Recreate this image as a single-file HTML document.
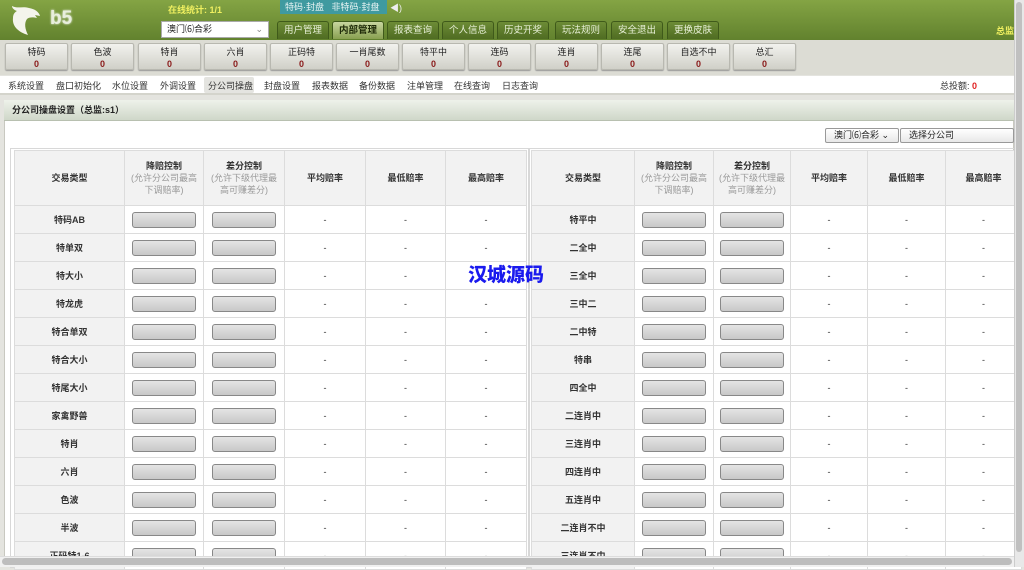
<!DOCTYPE html>
<html><head><meta charset="utf-8">
<style>
*{margin:0;padding:0;box-sizing:border-box}
body{width:1024px;height:567px;overflow:hidden;position:relative;background:#e4e4df;font-family:"Liberation Sans","Noto Sans CJK SC",sans-serif;font-size:9px;color:#222}
.abs{position:absolute}
#hdr{left:0;top:0;width:1014px;height:40px;background:linear-gradient(#84a444,#62822e)}
.tab{position:absolute;top:21px;height:18px;width:52px;background:linear-gradient(#6d8c36,#4f6c22);border:1px solid #3f5a1a;border-bottom:none;border-radius:3px 3px 0 0;color:#e8f0d8;font-size:9.5px;text-align:center;line-height:17px}
.tab.on{background:linear-gradient(#c8d6a0,#88a050);color:#1e2a08;font-weight:bold}
#bar{left:0;top:40px;width:1014px;height:35px;background:#dcdcd4}
.btn{position:absolute;top:43px;width:63px;height:27px;background:linear-gradient(#f2f2ee,#d0d0c8);border:1px solid #b8b8b0;border-radius:2px;box-shadow:0 1px 1px #999;text-align:center;font-size:9px;line-height:12px;padding-top:2px}
.btn b{color:#8a1a1a;display:block;font-size:9px}
#sub{left:0;top:76px;width:1014px;height:19px;background:#fff;border-bottom:2px solid #d4d4cc}
.sm{position:absolute;top:79px;font-size:9px;color:#333}
#panel{left:4px;top:100px;width:1010px;height:467px;background:#fff;border:1px solid #c8c8c0}
#ph{left:4px;top:100px;width:1010px;height:21px;background:linear-gradient(#eef2ea,#cfd7c9);border-bottom:1px solid #b8c0b0;font-size:9px;font-weight:bold;line-height:21px;padding-left:8px}
table{position:absolute;border-collapse:collapse;table-layout:fixed;background:#fff}
td{border:1px solid #dcdcdc;text-align:center;height:28px;font-size:9px;color:#333}
td.t{background:#f2f2f2;font-weight:bold}
tr.h td{height:55px;background:#f2f2f2;font-weight:bold;line-height:12px}
tr.h span{color:#999;font-weight:normal;display:block;white-space:nowrap}
i.in{display:inline-block;width:64px;height:16px;border:1px solid #888;border-radius:3px;background:linear-gradient(#e4e4e4,#c8c8c8);vertical-align:middle}
.sel{position:absolute;top:128px;height:15px;border:1px solid #999;border-radius:2px;background:linear-gradient(#fff,#e8e8e8);font-size:9px;line-height:13px;padding-left:8px}
</style></head><body>
<div id="hdr" class="abs"></div>
<svg class="abs" style="left:9px;top:4px" width="32" height="32" viewBox="0 0 32 32"><path d="M3 2 C9 5 13 2 20 4 C26 5 30 8 31 12 L26 11 L28 14 C24 13 20 13 18 15 C15 19 16 25 19 31 C9 28 3 22 4 14 C4 10 6 8 8 7 C5 6 3 4 3 2Z" fill="#f4f4ec"/></svg>
<div class="abs" style="left:50px;top:8px;font-size:19px;font-weight:bold;color:#e8eedd;text-shadow:0 0 2px #fff">b5</div>
<div class="abs" style="left:168px;top:3px;color:#f0f060;font-weight:bold;font-size:9px">在线统计: 1/1</div>
<div class="abs" style="left:280px;top:0;width:107px;height:14px;background:#3f9aa0;color:#e8f4f4;font-size:9px;line-height:14px;padding-left:5px">特码·封盘 &nbsp; 非特码·封盘</div>
<div class="abs" style="left:390px;top:1px;color:#eee;font-size:9px">◀)</div>
<div class="abs" style="left:161px;top:21px;width:108px;height:17px;background:#fff;border:1px solid #aaa;font-size:9px;line-height:15px;padding-left:5px">澳门⑹合彩<span style="position:absolute;right:5px;color:#888">⌄</span></div>
<div class="tab" style="left:277px">用户管理</div>
<div class="tab on" style="left:332px">内部管理</div>
<div class="tab" style="left:387px">报表查询</div>
<div class="tab" style="left:442px">个人信息</div>
<div class="tab" style="left:497px">历史开奖</div>
<div class="tab" style="left:555px">玩法规则</div>
<div class="tab" style="left:611px">安全退出</div>
<div class="tab" style="left:667px">更换皮肤</div>
<div class="abs" style="left:996px;top:24px;color:#f0f060;font-weight:bold;font-size:9px">总监</div>
<div id="bar" class="abs"></div>
<div class="btn" style="left:5px">特码<b>0</b></div>
<div class="btn" style="left:71px">色波<b>0</b></div>
<div class="btn" style="left:138px">特肖<b>0</b></div>
<div class="btn" style="left:204px">六肖<b>0</b></div>
<div class="btn" style="left:270px">正码特<b>0</b></div>
<div class="btn" style="left:336px">一肖尾数<b>0</b></div>
<div class="btn" style="left:402px">特平中<b>0</b></div>
<div class="btn" style="left:468px">连码<b>0</b></div>
<div class="btn" style="left:535px">连肖<b>0</b></div>
<div class="btn" style="left:601px">连尾<b>0</b></div>
<div class="btn" style="left:667px">自选不中<b>0</b></div>
<div class="btn" style="left:733px">总汇<b>0</b></div>
<div id="sub" class="abs"></div>
<div class="sm" style="left:8px">系统设置</div>
<div class="sm" style="left:56px">盘口初始化</div>
<div class="sm" style="left:112px">水位设置</div>
<div class="sm" style="left:160px">外调设置</div>
<div class="abs" style="left:204px;top:77px;width:50px;height:16px;background:#e4e4e0;border-radius:2px"></div>
<div class="sm" style="left:208px">分公司操盘</div>
<div class="sm" style="left:264px">封盘设置</div>
<div class="sm" style="left:312px">报表数据</div>
<div class="sm" style="left:359px">备份数据</div>
<div class="sm" style="left:407px">注单管理</div>
<div class="sm" style="left:454px">在线查询</div>
<div class="sm" style="left:502px">日志查询</div>
<div class="sm" style="left:940px">总投额: <span style="color:#e02020;font-weight:bold">0</span></div>
<div id="panel" class="abs"></div>
<div id="ph" class="abs">分公司操盘设置（总监:s1）</div>
<div class="sel" style="left:825px;width:74px">澳门⑹合彩 ⌄</div>
<div class="sel" style="left:900px;width:114px">选择分公司</div>
<div class="abs" style="left:10px;top:148px;width:520px;height:420px;border:1px solid #d8d8d8"></div>
<div class="abs" style="left:528px;top:148px;width:490px;height:420px;border:1px solid #d8d8d8"></div>
<table style="left:14px;top:150px;width:512px">
<colgroup><col style="width:110px"><col style="width:79px"><col style="width:81px"><col style="width:81px"><col style="width:80px"><col style="width:81px"></colgroup>
<tr class="h"><td>交易类型</td><td>降赔控制<span>(允许分公司最高<br>下调赔率)</span></td><td>差分控制<span>(允许下级代理最<br>高可赚差分)</span></td><td>平均赔率</td><td>最低赔率</td><td>最高赔率</td></tr>
<tr><td class="t">特码AB</td><td><i class="in"></i></td><td><i class="in"></i></td><td>-</td><td>-</td><td>-</td></tr>
<tr><td class="t">特单双</td><td><i class="in"></i></td><td><i class="in"></i></td><td>-</td><td>-</td><td>-</td></tr>
<tr><td class="t">特大小</td><td><i class="in"></i></td><td><i class="in"></i></td><td>-</td><td>-</td><td>-</td></tr>
<tr><td class="t">特龙虎</td><td><i class="in"></i></td><td><i class="in"></i></td><td>-</td><td>-</td><td>-</td></tr>
<tr><td class="t">特合单双</td><td><i class="in"></i></td><td><i class="in"></i></td><td>-</td><td>-</td><td>-</td></tr>
<tr><td class="t">特合大小</td><td><i class="in"></i></td><td><i class="in"></i></td><td>-</td><td>-</td><td>-</td></tr>
<tr><td class="t">特尾大小</td><td><i class="in"></i></td><td><i class="in"></i></td><td>-</td><td>-</td><td>-</td></tr>
<tr><td class="t">家禽野兽</td><td><i class="in"></i></td><td><i class="in"></i></td><td>-</td><td>-</td><td>-</td></tr>
<tr><td class="t">特肖</td><td><i class="in"></i></td><td><i class="in"></i></td><td>-</td><td>-</td><td>-</td></tr>
<tr><td class="t">六肖</td><td><i class="in"></i></td><td><i class="in"></i></td><td>-</td><td>-</td><td>-</td></tr>
<tr><td class="t">色波</td><td><i class="in"></i></td><td><i class="in"></i></td><td>-</td><td>-</td><td>-</td></tr>
<tr><td class="t">半波</td><td><i class="in"></i></td><td><i class="in"></i></td><td>-</td><td>-</td><td>-</td></tr>
<tr><td class="t">正码特1-6</td><td><i class="in"></i></td><td><i class="in"></i></td><td>-</td><td>-</td><td>-</td></tr>
</table>
<table style="left:531px;top:150px;width:490px">
<colgroup><col style="width:103px"><col style="width:79px"><col style="width:77px"><col style="width:77px"><col style="width:78px"><col style="width:76px"></colgroup>
<tr class="h"><td>交易类型</td><td>降赔控制<span>(允许分公司最高<br>下调赔率)</span></td><td>差分控制<span>(允许下级代理最<br>高可赚差分)</span></td><td>平均赔率</td><td>最低赔率</td><td>最高赔率</td></tr>
<tr><td class="t">特平中</td><td><i class="in"></i></td><td><i class="in"></i></td><td>-</td><td>-</td><td>-</td></tr>
<tr><td class="t">二全中</td><td><i class="in"></i></td><td><i class="in"></i></td><td>-</td><td>-</td><td>-</td></tr>
<tr><td class="t">三全中</td><td><i class="in"></i></td><td><i class="in"></i></td><td>-</td><td>-</td><td>-</td></tr>
<tr><td class="t">三中二</td><td><i class="in"></i></td><td><i class="in"></i></td><td>-</td><td>-</td><td>-</td></tr>
<tr><td class="t">二中特</td><td><i class="in"></i></td><td><i class="in"></i></td><td>-</td><td>-</td><td>-</td></tr>
<tr><td class="t">特串</td><td><i class="in"></i></td><td><i class="in"></i></td><td>-</td><td>-</td><td>-</td></tr>
<tr><td class="t">四全中</td><td><i class="in"></i></td><td><i class="in"></i></td><td>-</td><td>-</td><td>-</td></tr>
<tr><td class="t">二连肖中</td><td><i class="in"></i></td><td><i class="in"></i></td><td>-</td><td>-</td><td>-</td></tr>
<tr><td class="t">三连肖中</td><td><i class="in"></i></td><td><i class="in"></i></td><td>-</td><td>-</td><td>-</td></tr>
<tr><td class="t">四连肖中</td><td><i class="in"></i></td><td><i class="in"></i></td><td>-</td><td>-</td><td>-</td></tr>
<tr><td class="t">五连肖中</td><td><i class="in"></i></td><td><i class="in"></i></td><td>-</td><td>-</td><td>-</td></tr>
<tr><td class="t">二连肖不中</td><td><i class="in"></i></td><td><i class="in"></i></td><td>-</td><td>-</td><td>-</td></tr>
<tr><td class="t">三连肖不中</td><td><i class="in"></i></td><td><i class="in"></i></td><td>-</td><td>-</td><td>-</td></tr>
</table>
<div class="abs" style="left:468px;top:260px;color:#1a1aee;font-size:19px;font-weight:900">汉城源码</div>
<div class="abs" style="left:1014px;top:0;width:10px;height:567px;background:#e8e8e8;border-left:1px solid #ccc"></div>
<div class="abs" style="left:1016px;top:2px;width:6px;height:550px;background:#c0c0c0;border-radius:3px"></div>
<div class="abs" style="left:0;top:556px;width:1014px;height:11px;background:#f0f0f0;border-top:1px solid #ddd"></div>
<div class="abs" style="left:2px;top:558px;width:1010px;height:7px;background:#bdbdbd;border-radius:4px"></div>
</body></html>
